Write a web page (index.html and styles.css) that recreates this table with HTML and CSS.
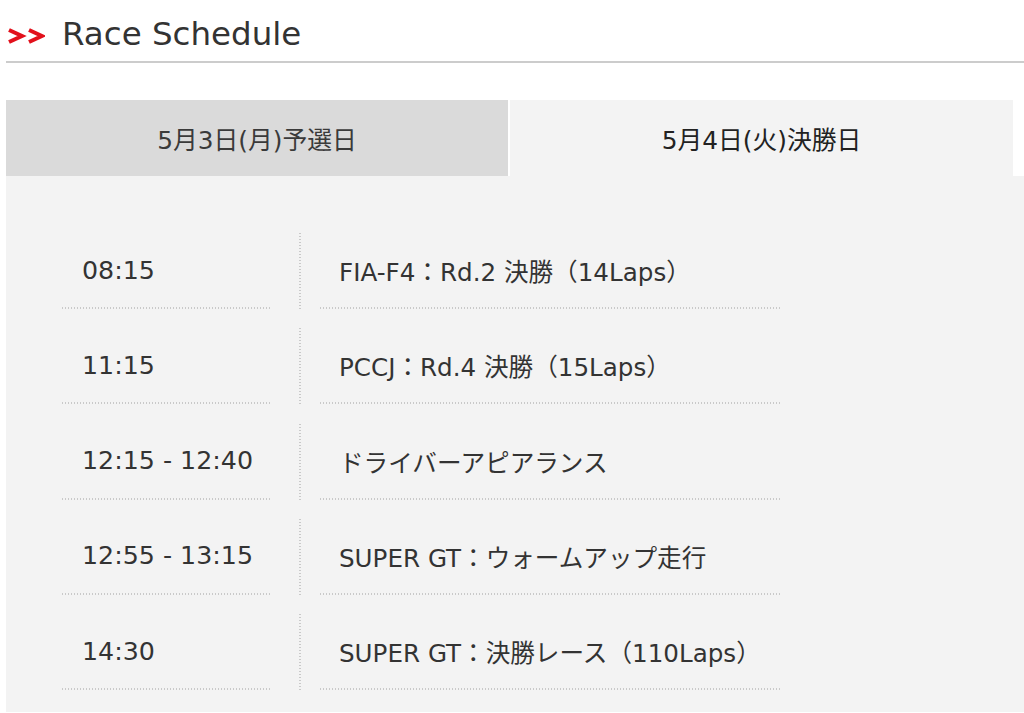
FILE: index.html
```html
<!DOCTYPE html>
<html lang="ja">
<head>
<meta charset="utf-8">
<title>Race Schedule</title>
<link rel="stylesheet" href="styles.css">
</head>
<body>
<header class="page-head">
  <svg class="chevrons" width="38" height="16" viewBox="0 0 38 16" aria-hidden="true">
    <polyline points="2,2 15,8 2,14" fill="none" stroke="#e2101b" stroke-width="4" stroke-linejoin="miter"/>
    <polyline points="22,2 35,8 22,14" fill="none" stroke="#e2101b" stroke-width="4" stroke-linejoin="miter"/>
  </svg>
  <h1 class="title">Race Schedule</h1>
</header>

<section class="schedule">
  <div class="tabs">
    <div class="tab">5月3日(月)予選日</div>
    <div class="tab tab-active">5月4日(火)決勝日</div>
  </div>
  <div class="panel">
    <div class="row">
      <div class="time">08:15</div>
      <div class="divider"></div>
      <div class="event">FIA-F4：Rd.2 決勝（14Laps）</div>
    </div>
    <div class="row">
      <div class="time">11:15</div>
      <div class="divider"></div>
      <div class="event">PCCJ：Rd.4 決勝（15Laps）</div>
    </div>
    <div class="row">
      <div class="time">12:15 - 12:40</div>
      <div class="divider"></div>
      <div class="event">ドライバーアピアランス</div>
    </div>
    <div class="row">
      <div class="time">12:55 - 13:15</div>
      <div class="divider"></div>
      <div class="event">SUPER GT：ウォームアップ走行</div>
    </div>
    <div class="row">
      <div class="time">14:30</div>
      <div class="divider"></div>
      <div class="event">SUPER GT：決勝レース（110Laps）</div>
    </div>
  </div>
</section>
</body>
</html>
```

FILE: styles.css
```css
html, body {
  margin: 0;
  padding: 0;
  background: #ffffff;
}

body {
  font-family: "DejaVu Sans", "Noto Sans CJK JP", sans-serif;
  color: #333333;
  overflow: hidden;
}

.page-head {
  display: flex;
  align-items: center;
  margin-left: 6px;
  height: 63px;
  box-sizing: border-box;
  padding-top: 14px;
  padding-bottom: 7px;
  border-bottom: 2px solid #cccccc;
}

.chevrons {
  display: block;
  margin-left: 1px;
  margin-top: 4px;
  flex: none;
}

.title {
  margin: 0 0 0 17px;
  font-size: 32.5px;
  line-height: 40px;
  font-weight: normal;
  color: #333333;
}

.schedule {
  margin: 37px 0 0 6px;
}

.tabs {
  display: flex;
  gap: 2px;
  padding-right: 11px;
}

.tab {
  height: 76px;
  display: flex;
  align-items: center;
  justify-content: center;
  font-size: 24.8px;
  background: #dadada;
  color: #3a3a3a;
  width: 502px;
}

.tab-active {
  background: #f3f3f3;
  color: #222222;
  width: 503px;
}

.panel {
  background: #f3f3f3;
  padding: 57px 0 3px 56px;
}

.row {
  display: flex;
  height: 76px;
  margin-bottom: 19.3px;
  font-size: 24.6px;
}

.time,
.event {
  display: flex;
  align-items: center;
  box-sizing: border-box;
  padding-bottom: 2px;
  white-space: nowrap;
  background-image: linear-gradient(to right, #c9c9c9 50%, transparent 50%);
  background-size: 3px 2px;
  background-repeat: repeat-x;
  background-position: left bottom;
}

.time {
  width: 210px;
  padding-left: 20px;
  font-size: 25.3px;
}

.divider {
  width: 2px;
  margin: 0 19px 0 27px;
  background-image: linear-gradient(to bottom, #c9c9c9 50%, transparent 50%);
  background-size: 2px 3px;
  background-repeat: repeat-y;
}

.event {
  width: 460px;
  padding-left: 19px;
}
```
